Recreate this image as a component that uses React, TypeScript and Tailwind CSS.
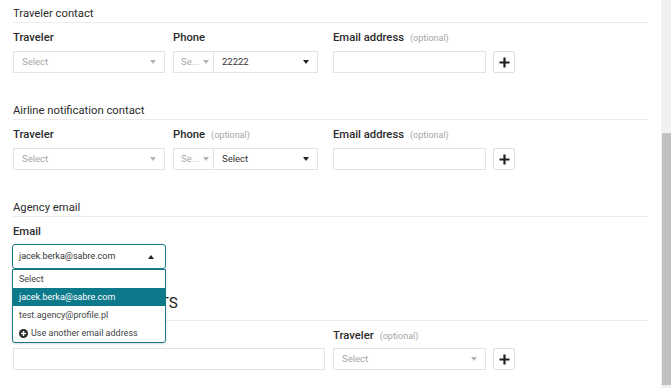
import React from "react";

const Caret = ({ dark = false, up = false }: { dark?: boolean; up?: boolean }) => (
  <svg width="6" height="4" viewBox="0 0 6 4" className={dark ? "text-[#222]" : "text-[#b5b5b5]"}>
    <path d={up ? "M0 4h6L3 0z" : "M0 0h6L3 4z"} fill="currentColor" />
  </svg>
);

function SelectBox({ value, placeholder = "Select", className = "", dark = false }: { value?: string; placeholder?: string; className?: string; dark?: boolean }) {
  return (
    <div className={`flex h-[22px] items-center justify-between border border-[#e3e3e3] bg-white pl-[8px] pr-[8px] text-[9.5px] ${className}`}>
      <span className={value || dark ? "text-[#333]" : "text-[#a8a8a8]"}>{value ?? placeholder}</span>
      <Caret dark={dark} />
    </div>
  );
}

function PlusButton() {
  return (
    <button className="flex h-[22px] w-[22px] items-center justify-center rounded-[2px] border border-[#e0e0e0] bg-white">
      <svg width="11" height="11" viewBox="0 0 11 11">
        <path d="M5.5 0.5v10M0.5 5.5h10" stroke="#1e1e1e" strokeWidth="2.2" />
      </svg>
    </button>
  );
}

function Label({ text, optional = false }: { text: string; optional?: boolean }) {
  return (
    <div className="h-[16px] text-[11.25px] leading-[16px] font-medium text-[#2b2b2b]">
      {text}
      {optional && <span className="ml-[6px] text-[9px] font-normal text-[#a5a5a5]">(optional)</span>}
    </div>
  );
}

function SectionTitle({ text }: { text: string }) {
  return (
    <div className="border-b border-[#ececec] text-[11.25px] leading-[16px] text-[#2b2b2b]">{text}</div>
  );
}

function ContactRow({ phoneOptional, phoneValue }: { phoneOptional: boolean; phoneValue?: string }) {
  return (
    <div className="mt-[7px] flex">
      <div className="w-[152px]">
        <Label text="Traveler" />
        <SelectBox className="mt-[5px]" />
      </div>
      <div className="ml-[8px] w-[145px]">
        <Label text="Phone" optional={phoneOptional} />
        <div className="mt-[5px] flex">
          <div className="flex h-[22px] w-[41px] items-center gap-[4px] border border-[#e3e3e3] pl-[7px] text-[9.5px] text-[#a8a8a8]">
            <span>Se...</span>
            <Caret />
          </div>
          <div className="-ml-px flex-1">
            <SelectBox value={phoneValue} placeholder="Select" dark />
          </div>
        </div>
      </div>
      <div className="ml-[15px] w-[153px]">
        <Label text="Email address" optional />
        <div className="mt-[5px] h-[22px] border border-[#e3e3e3] bg-white" />
      </div>
      <div className="ml-[7px] flex flex-col justify-end">
        <PlusButton />
      </div>
    </div>
  );
}

export default function App() {
  return (
    <div className="flex h-[388px] w-[671px] overflow-hidden bg-white font-['Roboto',sans-serif]">
      <div className="w-[661px] px-[13px] pt-[6px]">
        <SectionTitle text="Traveler contact" />
        <ContactRow phoneOptional={false} phoneValue="22222" />

        <div className="mt-[30px]">
          <SectionTitle text="Airline notification contact" />
          <ContactRow phoneOptional />
        </div>

        <div className="mt-[30px]">
          <SectionTitle text="Agency email" />
          <div className="mt-[7px]">
            <Label text="Email" />
            <div className="relative z-10 -ml-px mt-[4px] w-[154px]">
              <div className="flex h-[25px] items-center justify-between rounded-[3px] border border-[#1d7888] bg-white pl-[6px] pr-[11px] text-[9px] text-[#333]">
                <span>jacek.berka@sabre.com</span>
                <Caret dark up />
              </div>
              <div className="absolute left-0 top-[25px] w-[154px] rounded-b-[3px] border border-[#1d7888] bg-white text-[9px] leading-[18px] text-[#444] shadow-[0_1px_2px_rgba(0,0,0,0.15)]">
                <div className="h-[18px] pl-[6px]">Select</div>
                <div className="h-[18px] bg-[#0d7a8c] pl-[6px] text-white">jacek.berka@sabre.com</div>
                <div className="h-[18px] pl-[6px]">test.agency@profile.pl</div>
                <div className="flex h-[18px] items-center gap-[3px] pl-[6px]">
                  <svg width="9" height="9" viewBox="0 0 10 10">
                    <circle cx="5" cy="5" r="5" fill="#2a2a2a" />
                    <path d="M5 2.3v5.4M2.3 5h5.4" stroke="#fff" strokeWidth="1.6" />
                  </svg>
                  <span>Use another email address</span>
                </div>
              </div>
            </div>
          </div>
        </div>

        <div className="mt-[22px] border-b border-[#ececec] pb-[5px] text-[15.25px] leading-[24px] whitespace-nowrap text-[#222]">
          ADDITIONAL REQUESTS
        </div>
        <div className="mt-[7px] flex">
          <div className="w-[312px]">
            <Label text="Text" />
            <div className="mt-[4px] h-[22px] border border-[#e3e3e3] bg-white" />
          </div>
          <div className="ml-[8px] w-[153px]">
            <Label text="Traveler" optional />
            <SelectBox className="mt-[4px]" />
          </div>
          <div className="ml-[7px] flex flex-col justify-end">
            <PlusButton />
          </div>
        </div>
      </div>
      <div className="w-[10px] bg-[#f1f1f1] pt-[133px]">
        <div className="ml-px h-[252px] w-[9px] bg-[#c1c1c1]" />
      </div>
    </div>
  );
}
